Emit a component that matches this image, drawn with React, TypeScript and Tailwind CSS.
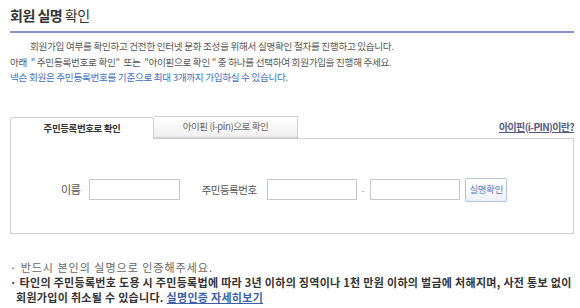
import { useState } from "react";

const font = { fontFamily: '"Noto Sans CJK KR", "Noto Sans", sans-serif' };

export default function App() {
  const [tab, setTab] = useState(0);
  return (
    <div className="w-[580px] h-[308px] bg-white pl-[10px] pr-[6px] overflow-hidden" style={font}>
      <h1 className="pt-[5px] pb-[6px] text-[14px] leading-[20px] text-[#333] border-b-2 border-[#8393d6] tracking-[-0.5px]">
        <span className="font-bold">회원 실명</span> 확인
      </h1>

      <div className="mt-[6px] text-[9.6px] leading-[15.5px] text-[#555] tracking-[-0.3px]">
        <p className="pl-[20px]">회원가입 여부를 확인하고 건전한 인터넷 문화 조성을 위해서 실명확인 절차를 진행하고 있습니다.</p>
        <p>아래 &nbsp;" 주민등록번호로 확인"&nbsp; 또는 &nbsp;"아이핀으로 확인 " 중 하나를 선택하여 회원가입을 진행해 주세요.</p>
        <p className="text-[#3d6fc4]">넥슨 회원은 주민등록번호를 기준으로 최대 3개까지 가입하실 수 있습니다.</p>
      </div>

      <div className="mt-[30px] flex items-end">
        <button
          onClick={() => setTab(0)}
          className={
            tab === 0
              ? "w-[144px] h-[22px] -mb-px bg-white border border-b-0 border-[#cfcfcf] rounded-t-[3px] text-[9.5px] font-bold text-[#333] tracking-[-0.4px] relative z-10"
              : "w-[144px] h-[22px] bg-gradient-to-b from-white to-[#efefef] border border-[#cfcfcf] rounded-t-[3px] text-[9.5px] text-[#666] tracking-[-0.4px]"
          }
        >
          주민등록번호로 확인
        </button>
        <button
          onClick={() => setTab(1)}
          className={
            tab === 1
              ? "w-[144px] h-[22px] -mb-px bg-white border border-b-0 border-[#cfcfcf] rounded-t-[3px] text-[9.5px] font-bold text-[#333] tracking-[-0.4px] relative z-10"
              : "w-[144px] h-[22px] bg-gradient-to-b from-white to-[#efefef] border border-l-0 border-[#cfcfcf] text-[9.5px] text-[#666] tracking-[-0.4px]"
          }
        >
          아이핀 (i-pin)으로 확인
        </button>
        <a href="#" className="ml-auto self-start mt-[3px] text-[10px] font-bold text-[#575c83] underline tracking-[-0.6px]">
          아이핀(i-PIN)이란?
        </a>
      </div>

      <div className="h-[96px] border border-[#cfcfcf] flex items-center pl-[50px] pt-[8px] text-[11px] text-[#555]">
        <span className="tracking-[-0.3px]">이름</span>
        <input className="ml-[8px] w-[91px] h-[21px] border border-[#c8c8c8] outline-none" />
        <span className="ml-[22px] text-[10.5px] tracking-[-0.5px]">주민등록번호</span>
        <input className="ml-[10px] w-[90px] h-[21px] border border-[#c8c8c8] outline-none" />
        <span className="mx-[5px] text-[#aaa] text-[10px]">-</span>
        <input className="w-[90px] h-[21px] border border-[#c8c8c8] outline-none" />
        <button className="ml-[5px] w-[42px] h-[24px] border border-[#b5c4da] rounded-[2px] bg-gradient-to-b from-white to-[#edf1f7] text-[9.5px] text-[#5a80bd] tracking-[-0.4px]">
          실명확인
        </button>
      </div>

      <ul className="mt-[26px] text-[11px] leading-[15px]">
        <li className="text-[#666] tracking-[1px]">· 반드시 본인의 실명으로 인증해주세요.</li>
        <li className="font-bold text-[#333] tracking-[0.3px] whitespace-nowrap">
          <span className="block">· 타인의 주민등록번호 도용 시 주민등록법에 따라 3년 이하의 징역이나 1천 만원 이하의 벌금에 처해지며, 사전 통보 없이</span>
          <span className="block pl-[6px]">
            회원가입이 취소될 수 있습니다.{" "}
            <a href="#" className="text-[#3e5fa8] underline">실명인증 자세히보기</a>
          </span>
        </li>
      </ul>
    </div>
  );
}
